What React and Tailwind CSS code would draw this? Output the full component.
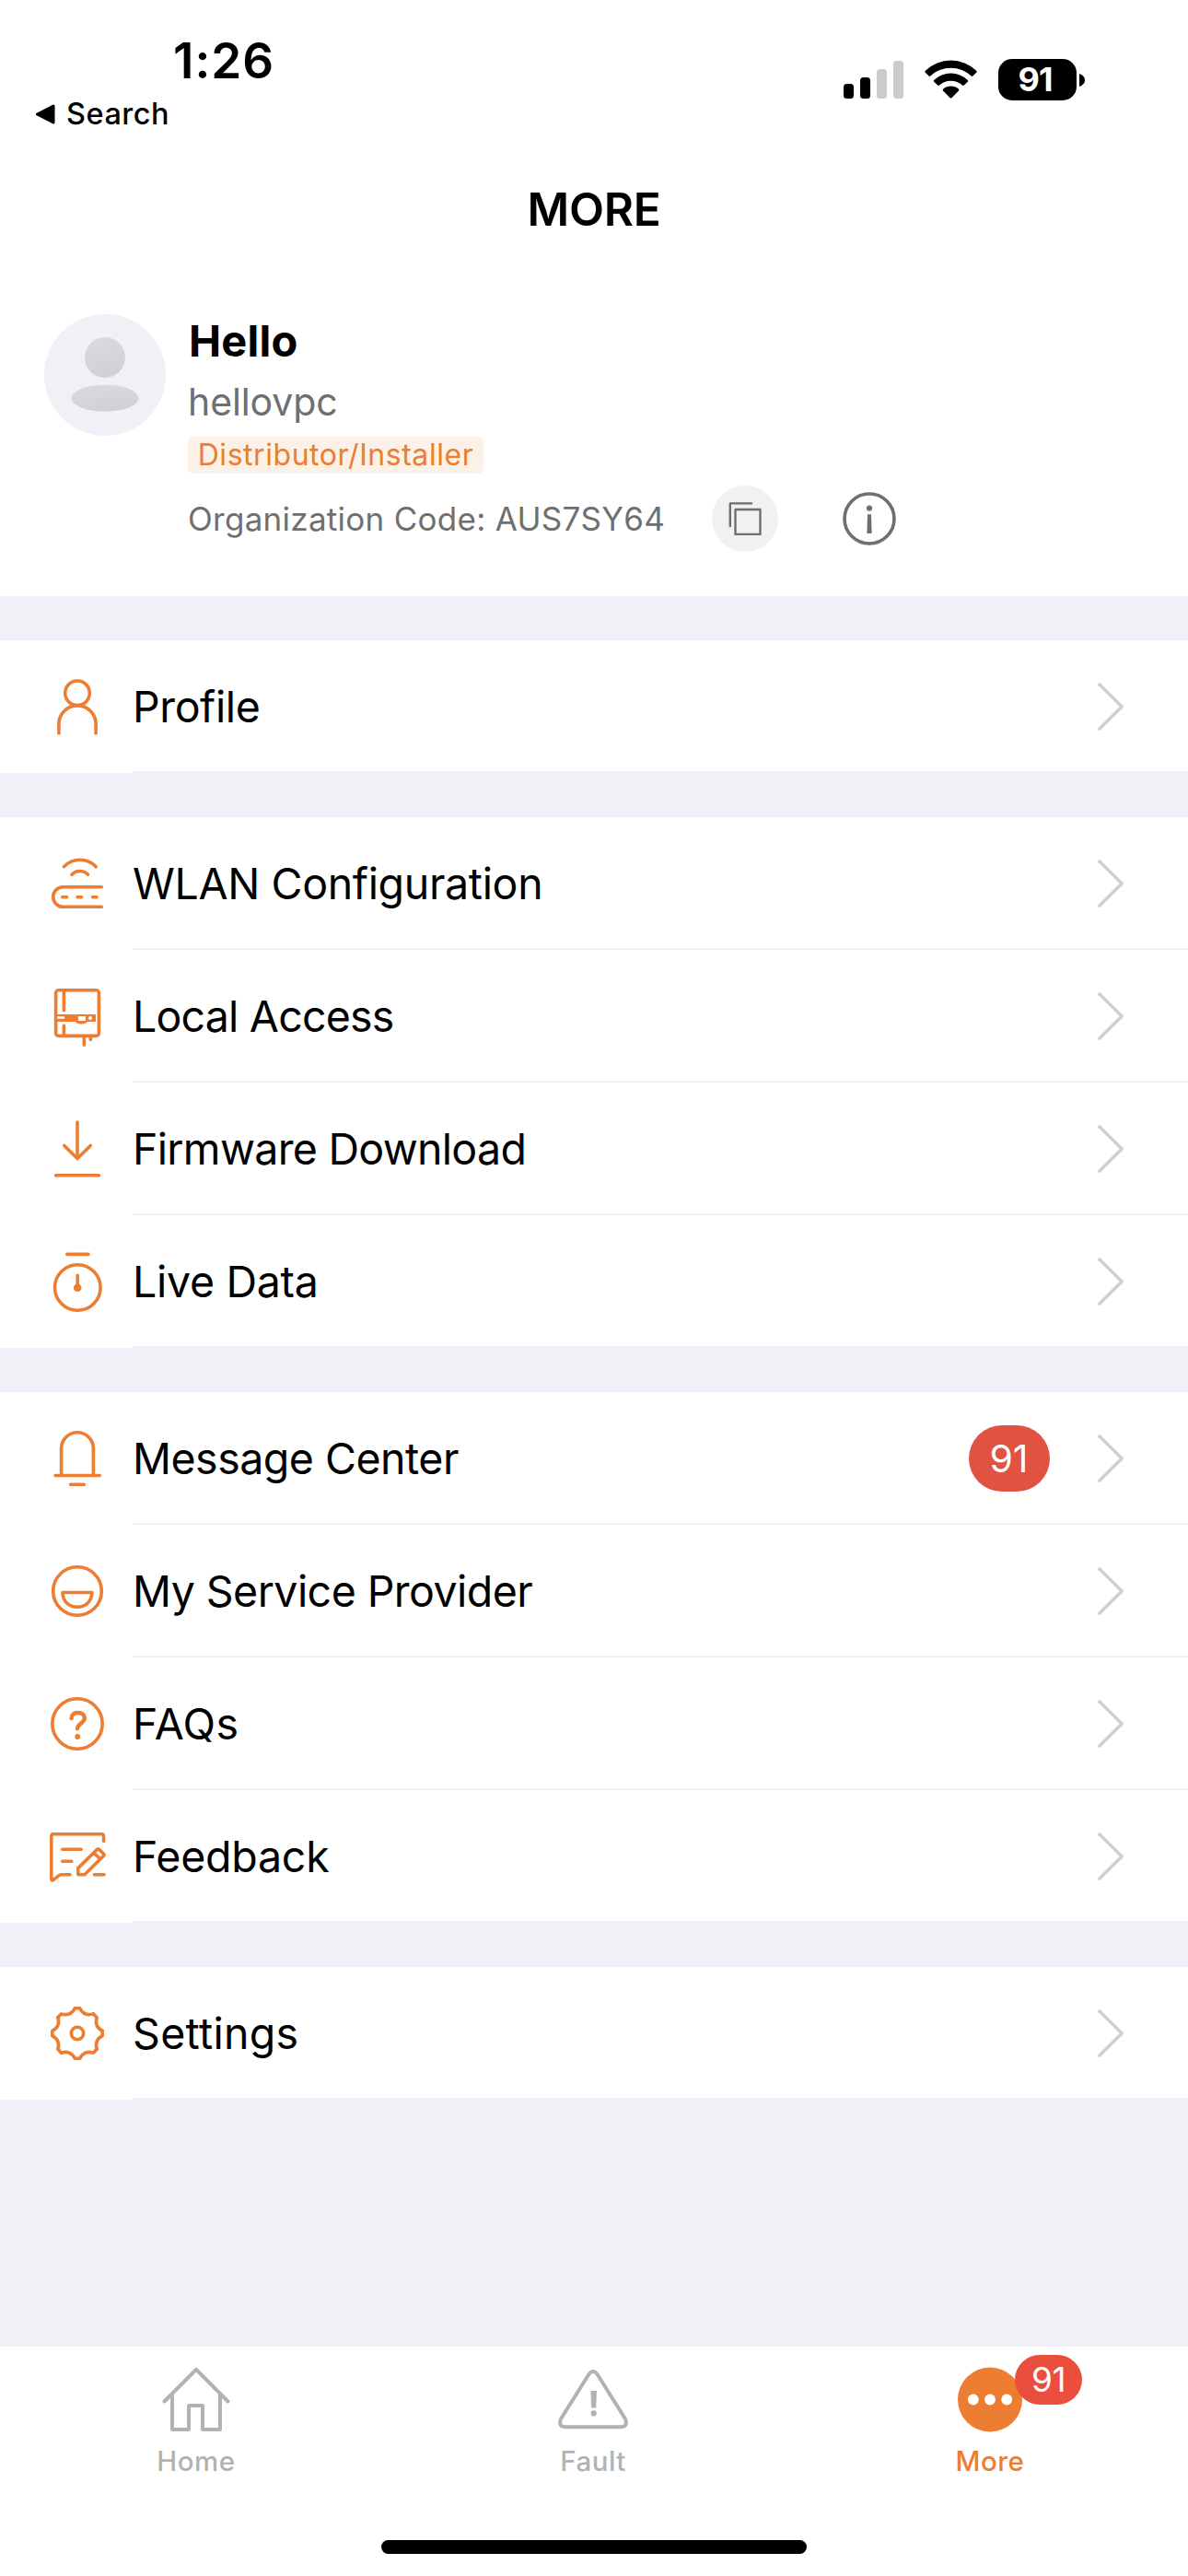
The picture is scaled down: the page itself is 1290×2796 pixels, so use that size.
const GROUPS = [
  [{ label: 'Profile', icon: ProfileIcon, spacing: 'tracking-[-0.4px]' }],
  [
    { label: 'WLAN Configuration', icon: WlanIcon, spacing: 'tracking-[-0.35px]' },
    { label: 'Local Access', icon: InverterIcon, spacing: 'tracking-[-0.8px]' },
    { label: 'Firmware Download', icon: DownloadIcon, spacing: 'tracking-[-0.7px]' },
    { label: 'Live Data', icon: TimerIcon, spacing: 'tracking-[-0.3px]' },
  ],
  [
    { label: 'Message Center', icon: BellIcon, badge: 91, spacing: 'tracking-[-0.5px]' },
    { label: 'My Service Provider', icon: SmileIcon, spacing: 'tracking-[-0.55px]' },
    { label: 'FAQs', icon: QuestionIcon, spacing: 'tracking-[0.4px]' },
    { label: 'Feedback', icon: FeedbackIcon, spacing: 'tracking-[-0.25px]' },
  ],
  [{ label: 'Settings', icon: GearIcon, spacing: 'tracking-[0.3px]' }],
]

export default function App() {
  return (
    <div className="flex flex-col w-[1290px] h-[2796px] bg-[#f1f0f6] font-['Inter',sans-serif] text-black whitespace-nowrap overflow-hidden">

      {/* ── HEADER ── */}
      <header className="h-[647px] bg-white flex-shrink-0">
        <StatusBar />
        <h1 className="h-[142px] leading-[142px] text-center text-[49.5px] font-semibold tracking-[-0.3px]">MORE</h1>
        <Account />
      </header>

      {/* ── MENU ── */}
      <main className="flex-1 flex flex-col gap-12 pt-12">
        {GROUPS.map((group, i) => (
          <div key={i} className="bg-white">
            {group.map(item => <MenuRow key={item.label} item={item} />)}
          </div>
        ))}
      </main>

      <TabBar />
    </div>
  )
}

function StatusBar() {
  return (
    <div className="flex justify-between h-[156px]">
      <div className="pt-[40px]">
        <p className="pl-[188px] h-[52px] leading-[52px] text-[53px] font-semibold tracking-[1px]">1:26</p>
        <div className="flex items-center gap-[12px] mt-4 pl-[38px] h-8">
          <svg width="22" height="22" viewBox="0 0 22 22">
            <path d="M2.5 11L20 2V20Z" stroke="#000" strokeWidth="3" strokeLinejoin="round" />
          </svg>
          <span className="text-[32.5px] leading-8 font-medium tracking-[0.5px]">Search</span>
        </div>
      </div>
      <div className="flex items-start pt-16 pr-[112px]">
        <svg className="mt-[2px]" width="65" height="41" viewBox="0 0 65 41">
          <rect x="0" y="25" width="11" height="16" rx="3.5" />
          <rect x="18" y="18" width="11" height="23" rx="3.5" />
          <rect x="36" y="9" width="11" height="32" rx="3.5" fill="#cbcbcb" />
          <rect x="54" y="0" width="11" height="41" rx="3.5" fill="#cbcbcb" />
        </svg>
        <svg className="ml-[23px] mt-px" width="57" height="42" viewBox="0 0 57 42">
          <path d="M0.8 11.8Q-0.2 12.8 0.8 13.8L4.6 17.6Q5.4 18.4 6.3 17.6A32 32 0 0 1 50.7 17.6Q51.6 18.4 52.4 17.6L56.2 13.8Q57.2 12.8 56.2 11.8A39.5 39.5 0 0 0 0.8 11.8Z" />
          <path d="M10.2 22Q9.4 22.9 10.2 23.7L14.2 27.6Q15 28.4 16 27.6A18.5 18.5 0 0 1 41 27.6Q42 28.4 42.8 27.6L46.8 23.7Q47.6 22.9 46.8 22A26.3 26.3 0 0 0 10.2 22Z" />
          <path d="M20 31.8Q19.2 32.6 20 33.4L27.6 41.2Q28.5 42 29.4 41.2L37 33.4Q37.8 32.6 37 31.8A12.8 12.8 0 0 0 20 31.8Z" />
        </svg>
        <div className="ml-[23px] w-[85px] h-[45px] rounded-[15px] bg-black text-white text-[36px] leading-[45px] font-bold tracking-[-1px] text-center pr-[5px]">
          91
        </div>
        <svg className="ml-[3px] mt-4" width="6" height="14" viewBox="0 0 6 14">
          <path d="M0 0C3 1 6 3.5 6 7S3 13 0 14Z" />
        </svg>
      </div>
    </div>
  )
}

function Account() {
  return (
    <section className="flex gap-6 pt-[43px] pl-12">
      <svg width="132" height="132" viewBox="0 0 132 132">
        <defs>
          <linearGradient id="avatar" x1="0" y1="0" x2="0.3" y2="1">
            <stop offset="0" stopColor="#dadbde" />
            <stop offset="1" stopColor="#d0d1d5" />
          </linearGradient>
        </defs>
        <circle cx="66" cy="66" r="66" fill="#f0f1f6" />
        <circle cx="66" cy="47" r="22" fill="url(#avatar)" />
        <ellipse cx="66" cy="91.2" rx="36.5" ry="14.5" fill="url(#avatar)" />
      </svg>
      <div className="flex flex-col items-start">
        <p className="h-[58px] leading-[58px] pl-px text-[47px] font-bold tracking-[0.2px]">Hello</p>
        <p className="h-[74px] leading-[74px] text-[41px] tracking-[-0.1px] text-[#6f6f6f]">hellovpc</p>
        <span className="mt-px h-10 w-[321px] text-center leading-10 rounded-md bg-[#fcf1e7] text-[#ed7d31] text-[32px] tracking-[0.55px]">
          Distributor/Installer
        </span>
        <div className="flex items-center mt-[13px] h-[72px]">
          <p className="w-[569px] text-[35px] tracking-[0.28px] text-[#6f6f6f]">Organization Code: AUS7SY64</p>
          <button className="w-[72px] h-[72px] rounded-full bg-[#f1f1f1] flex items-center justify-center">
            <svg width="36" height="36" viewBox="0 0 36 36" fill="none" stroke="#6f6f6f" strokeWidth="2.4" strokeLinejoin="round" strokeLinecap="round">
              <path d="M25 1.4H1.8V26" />
              <rect x="7.5" y="8" width="27" height="27" />
            </svg>
          </button>
          <svg className="ml-[70px]" width="58" height="58" viewBox="0 0 58 58">
            <circle cx="29" cy="29" r="27" fill="none" stroke="#6f6f6f" strokeWidth="3.6" />
            <circle cx="29" cy="17.6" r="3.1" fill="#6f6f6f" />
            <path d="M27 24.2H31L31.6 45H26.4Z" fill="#6f6f6f" />
          </svg>
        </div>
      </div>
    </section>
  )
}

function MenuRow({ item }) {
  const Icon = item.icon
  return (
    <div className="flex h-36 pl-12">
      <div className="w-24 flex items-center">
        <Icon />
      </div>
      <div className="flex-1 flex items-center border-b-2 border-[#f1f0f6] pt-[2px] pr-[70px]">
        <span className={`pt-[2px] text-[46.5px] ${item.spacing}`}>{item.label}</span>
        {item.badge && (
          <span className="ml-auto mr-[52px] w-[88px] h-[72px] rounded-full bg-[#e15241] text-white text-[41px] leading-[72px] text-center pr-px">
            {item.badge}
          </span>
        )}
        <svg className={item.badge ? '' : 'ml-auto'} width="28" height="52" viewBox="0 0 28 52" fill="none">
          <path d="M2 2L26.2 26L2 50" stroke="#d0d0d0" strokeWidth="3.6" strokeLinecap="round" strokeLinejoin="round" />
        </svg>
      </div>
    </div>
  )
}

function TabBar() {
  return (
    <nav className="h-[249px] bg-white flex-shrink-0">
      <div className="flex h-[210px] pt-[22px] text-[29.5px] leading-9 font-medium tracking-[0.5px] text-[#b2b2b2]">
        <div className="w-[426px] flex flex-col items-center">
          <svg width="74" height="72" viewBox="0 0 74 72" fill="none" stroke="#b2b2b2" strokeWidth="4" strokeLinecap="round" strokeLinejoin="round">
            <path d="M2.5 37.5L37 2.8L71.5 37.5" />
            <path d="M11 30V68H29V42H44V68H63V30" />
          </svg>
          <span className="mt-3">Home</span>
        </div>
        <div className="w-[436px] flex flex-col items-center">
          <svg width="76" height="72" viewBox="0 0 76 72" fill="none">
            <path d="M32.8 9Q38 1.2 43.2 9L73 56.5Q76 65 68.5 65.2H7.5Q0 65 3 56.5Z" stroke="#b2b2b2" strokeWidth="4" strokeLinejoin="round" />
            <path d="M35.4 26H42L41.2 44.6H36.2Z" fill="#b2b2b2" />
            <circle cx="38.7" cy="50.4" r="3.1" fill="#b2b2b2" />
          </svg>
          <span className="mt-3">Fault</span>
        </div>
        <div className="w-[426px] flex flex-col items-center text-[#ed7d31]">
          <div className="relative h-[72px]">
            <svg width="72" height="72" viewBox="0 0 72 72">
              <circle cx="36" cy="35.5" r="35" fill="#ed7d31" />
              <circle cx="17.8" cy="35.5" r="5.9" fill="#fff" />
              <circle cx="36" cy="35.5" r="5.9" fill="#fff" />
              <circle cx="54.2" cy="35.5" r="5.9" fill="#fff" />
            </svg>
            <span className="absolute -top-[13px] left-[63px] w-[73px] h-[54px] rounded-full bg-[#ea4f3e] text-white text-[37px] leading-[54px] tracking-[-0.5px] text-center font-normal">
              91
            </span>
          </div>
          <span className="mt-3">More</span>
        </div>
      </div>
      <div className="w-[462px] h-[15px] mx-auto rounded-full bg-black" />
    </nav>
  )
}

// Shared 72px canvas for the orange line icons
function LineIcon({ children }) {
  return (
    <svg width="72" height="72" viewBox="0 0 72 72" fill="none" stroke="#ed7d31" strokeWidth="3.6" strokeLinecap="round" strokeLinejoin="round">
      {children}
    </svg>
  )
}

function ProfileIcon() {
  return (
    <LineIcon>
      <circle cx="36" cy="21.3" r="13.3" />
      <path d="M15.9 65V55A20.1 20.1 0 0 1 56.1 55V65" />
    </LineIcon>
  )
}

function WlanIcon() {
  return (
    <LineIcon>
      <path d="M21.4 17.7A24 24 0 0 1 56.2 17.7M30 26.3A12 12 0 0 1 47.5 26.3" />
      <path d="M62.3 39.7H20.5A10.8 10.8 0 0 0 20.5 61.3H62.3" />
      <path d="M19.8 50.7H24.6M36 50.7H40.6M52.6 50.7H57" />
    </LineIcon>
  )
}

function InverterIcon() {
  return (
    <LineIcon>
      <rect x="12.6" y="7.8" width="46.8" height="49.6" rx="3" />
      <path d="M21.4 8V29.8M21.4 46.2V57" />
      <path d="M12 34H56V42H47Q45.5 44.4 40.5 44.4T34 42H12Z" fill="#ed7d31" stroke="none" />
      <path d="M14.3 36.3H22V38.8H14.3ZM37 36H45V41H37Z" fill="#fff" stroke="none" />
      <circle cx="50" cy="38" r="2" fill="#fff" stroke="none" />
      <path d="M43.3 59V67.2M50.4 59V61.5" />
    </LineIcon>
  )
}

function DownloadIcon() {
  return (
    <LineIcon>
      <path d="M36 7V46.5M21.8 32.5L36 46.5L50.2 32.5M12.6 64.8H59.4" />
    </LineIcon>
  )
}

function TimerIcon() {
  return (
    <LineIcon>
      <path d="M24.8 6.4H48M36.2 29.4V42" />
      <circle cx="36.3" cy="42.5" r="24.8" />
      <circle cx="36.2" cy="42.7" r="4.3" fill="#ed7d31" stroke="none" />
    </LineIcon>
  )
}

function BellIcon() {
  return (
    <LineIcon>
      <path d="M18.6 54V25.2A17.4 17.4 0 0 1 53.4 25.2V54M12 54.5H60.2M28.6 64.3H43.4" />
    </LineIcon>
  )
}

function SmileIcon() {
  return (
    <LineIcon>
      <circle cx="36" cy="36" r="26.3" />
      <path d="M20 37.5H51.8C51.8 46.5 45.5 53.3 35.9 53.3S20 46.5 20 37.5Z" />
    </LineIcon>
  )
}

function QuestionIcon() {
  return (
    <LineIcon>
      <circle cx="36" cy="36" r="27.2" />
      <path d="M29.6 30C29.6 26 32.6 24 36.4 24C40.8 24 43.9 26.3 43.9 29.8C43.9 35.3 36 35.6 36 41.3" strokeWidth="4.4" />
      <circle cx="36.2" cy="50" r="3" fill="#ed7d31" stroke="none" />
    </LineIcon>
  )
}

function FeedbackIcon() {
  return (
    <LineIcon>
      <path d="M64.6 19.4V14.2Q64.6 11.8 62.2 11.8H10.2Q7.8 11.8 7.8 14.2V60.5Q8 62.8 10.3 61.2L16.5 56.4Q17.4 55.7 18.6 55.7H28" />
      <path d="M19.8 28.2H40.2M19.8 41.2H29.8M54.4 55.7H65" />
      <path d="M36.8 55.7V48.6L57.5 28.4Q58.6 27.4 59.7 28.4L64.6 33.2Q65.6 34.3 64.6 35.3L43.8 55.7ZM54 32.2L60.8 38.8" />
    </LineIcon>
  )
}

function GearIcon() {
  return (
    <LineIcon>
      <circle cx="36" cy="36" r="6.7" />
      {[0, 45, 90, 135, 180, 225, 270, 315].map(deg => (
        <path key={deg} transform={`translate(36 36) rotate(${deg})`} d="M-2.7 -27.2H2.7C6 -21 10.6 -19.1 17.3 -21.1" />
      ))}
    </LineIcon>
  )
}
